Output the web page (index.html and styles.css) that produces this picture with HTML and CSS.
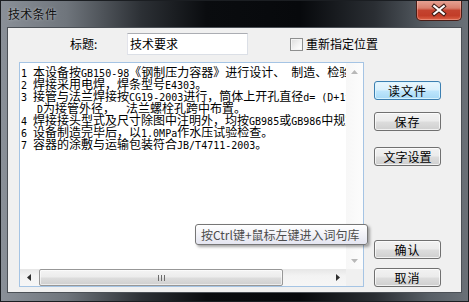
FILE: index.html
```html
<!DOCTYPE html>
<html lang="zh">
<head>
<meta charset="utf-8">
<title>技术条件</title>
<link rel="stylesheet" href="styles.css">
</head>
<body>
<div class="window">
  <div class="titlebar">
    <span class="title">技术条件</span>
    <div class="close">
      <svg width="46" height="20" viewBox="0 0 46 20">
        <path d="M18 6 L28 14 M28 6 L18 14" stroke="#3a1a14" stroke-width="4.2" stroke-linecap="square" fill="none"/>
        <path d="M18 6 L28 14 M28 6 L18 14" stroke="#ffffff" stroke-width="2.2" stroke-linecap="square" fill="none"/>
      </svg>
    </div>
  </div>
  <div class="client">
    <div class="toprow">
      <span class="lbl">标题:</span>
      <div class="input">技术要求</div>
      <span class="check"></span>
      <span class="chklbl">重新指定位置</span>
    </div>
    <div class="main">
      <div class="memo">
        <div class="text">
          <div class="ln"><span class="l">1 </span>本设备按<span class="l">GB150-98</span>《钢制压力容器》进行设计、<span class="l"> </span>制造、检验</div>
          <div class="ln"><span class="l">2 </span>焊接采用电焊，焊条型号<span class="l">E4303</span>。</div>
          <div class="ln"><span class="l">3 </span>接管与法兰焊接按<span class="l">CG19-2003</span>进行，筒体上开孔直径<span class="l">d= (D+1^</span></div>
          <div class="ln"><span class="ind"></span><span class="l">D</span>为接管外径，<span class="sp"></span>法兰螺栓孔跨中布置。</div>
          <div class="ln"><span class="l">4 </span>焊接接头型式及尺寸除图中注明外，均按<span class="l">GB985</span>或<span class="l">GB986</span>中规定</div>
          <div class="ln"><span class="l">6 </span>设备制造完毕后，以<span class="l">1.0MPa</span>作水压试验检查。</div>
          <div class="ln"><span class="l">7 </span>容器的涂敷与运输包装符合<span class="l">JB/T4711-2003</span>。</div>
        </div>
        <div class="vscroll">
          <div class="sbtn"><svg width="7" height="4" viewBox="0 0 7 4"><path d="M0 4 L3.5 0 L7 4 Z" fill="#b8b8b8"/></svg></div>
          <div class="sbtn"><svg width="7" height="4" viewBox="0 0 7 4"><path d="M0 0 L3.5 4 L7 0 Z" fill="#b8b8b8"/></svg></div>
        </div>
        <div class="hscroll">
          <div class="hbtn"><svg width="4" height="7" viewBox="0 0 4 7"><path d="M4 0 L0 3.5 L4 7 Z" fill="#2e2e2e"/></svg></div>
          <div class="thumb">
            <svg width="7" height="6" viewBox="0 0 7 6"><path d="M0.5 0 V6 M3.5 0 V6 M6.5 0 V6" stroke="#6c6c6c" stroke-width="1"/></svg>
          </div>
          <div class="hbtn right"><svg width="4" height="7" viewBox="0 0 4 7"><path d="M0 0 L4 3.5 L0 7 Z" fill="#2e2e2e"/></svg></div>
        </div>
        <div class="corner"></div>
      </div>
      <div class="btns">
        <div class="btn def first">读文件</div>
        <div class="btn save">保存</div>
        <div class="btn font">文字设置</div>
        <div class="btn ok">确认</div>
        <div class="btn cancel">取消</div>
      </div>
    </div>
  </div>
  <div class="tooltip">按Ctrl键+鼠标左键进入词句库</div>
</div>
</body>
</html>
```
FILE: styles.css
```css
html, body {
  margin: 0;
  padding: 0;
  background: #000;
}

body {
  font-family: "Noto Sans CJK SC", "Noto Sans", sans-serif;
  font-size: 12px;
  color: #000;
}

.window {
  position: relative;
  width: 469px;
  height: 302px;
  box-sizing: border-box;
  border: 1px solid #1b1e22;
  background: linear-gradient(90deg, #8a9098 0%, #6f757c 14%, #2c3035 30%, #0a0c0f 44%, #07090c 64%, #2a2e33 80%, #596067 92%, #6a7077 100%);
  display: flex;
  flex-direction: column;
  overflow: hidden;
}

.titlebar {
  height: 26px;
  display: flex;
  align-items: flex-start;
}

.title {
  margin: 5px 0 0 7px;
  line-height: 15px;
  font-size: 12px;
  letter-spacing: 0.3px;
  color: #101010;
  text-shadow: 0 0 3px rgba(220, 225, 230, 0.7);
}

.close {
  margin-left: auto;
  margin-right: 6px;
  margin-top: -1px;
  width: 46px;
  height: 21px;
  box-sizing: border-box;
  border: 1px solid #4a1d16;
  border-top: none;
  border-radius: 0 0 5px 5px;
  background: linear-gradient(180deg, #e7a597 0%, #d9806e 40%, #c4432f 52%, #c23d28 78%, #dd6347 100%);
  box-shadow: inset 0 0 0 1px rgba(255, 210, 200, 0.35);
  display: flex;
}

.client {
  margin-left: 6px;
  width: 455px;
  height: 266px;
  box-sizing: border-box;
  border: 1px solid #4b5056;
  background: #f0f0f0;
  padding: 5px 0 0 11px;
  display: flex;
  flex-direction: column;
}

.toprow {
  height: 22px;
  display: flex;
  align-items: center;
  padding-left: 51px;
}

.lbl {
  width: 57px;
  line-height: 14px;
}

.input {
  width: 121px;
  height: 22px;
  box-sizing: border-box;
  border: 1px solid #dbdfe6;
  border-top-color: #abadb3;
  border-left-color: #e2e3ea;
  background: #fff;
  padding-left: 2px;
  line-height: 20px;
}

.check {
  margin-left: 42px;
  width: 13px;
  height: 13px;
  box-sizing: border-box;
  border: 1px solid #8e8f8f;
  background: linear-gradient(135deg, #dcdcdc 0%, #f4f4f4 60%, #ffffff 100%);
  box-shadow: inset 0 0 0 1px #f4f4f4;
}

.chklbl {
  margin-left: 3px;
  line-height: 14px;
}

.main {
  margin-top: 7px;
  display: flex;
}

.memo {
  width: 345px;
  height: 225px;
  box-sizing: border-box;
  border: 1px solid #a5c4e4;
  background: #fff;
  display: grid;
  grid-template-columns: 326px 17px;
  grid-template-rows: 206px 17px;
}

.text {
  overflow: hidden;
  padding: 3px 0 0 1px;
}

.ln {
  height: 12px;
  line-height: 12px;
  font-size: 12px;
  white-space: pre;
}

.l {
  font-family: "DejaVu Sans Mono", "Liberation Mono", monospace;
  font-size: 10px;
}

.ind {
  display: inline-block;
  width: 16px;
}

.sp {
  display: inline-block;
  width: 11px;
}

.vscroll {
  grid-row: 1;
  grid-column: 2;
  background: linear-gradient(90deg, #f7f7f7, #fcfcfc);
  display: flex;
  flex-direction: column;
  justify-content: space-between;
}

.sbtn {
  height: 17px;
  display: flex;
  align-items: center;
  justify-content: center;
}

.hscroll {
  grid-row: 2;
  grid-column: 1;
  background: linear-gradient(180deg, #e6e6e6, #f3f3f3 40%, #f6f6f6);
  display: flex;
  align-items: stretch;
}

.hbtn {
  width: 17px;
  display: flex;
  align-items: center;
  justify-content: center;
}

.hbtn.right {
  margin-left: auto;
}

.thumb {
  margin: 0 0 0 2px;
  width: 244px;
  box-sizing: border-box;
  border: 1px solid #979797;
  border-radius: 2px;
  background: linear-gradient(180deg, #f4f4f4 0%, #ececec 45%, #dcdcdc 55%, #cfcfcf 100%);
  box-shadow: inset 0 0 0 1px rgba(255, 255, 255, 0.6);
  display: flex;
  align-items: center;
  justify-content: center;
}

.corner {
  grid-row: 2;
  grid-column: 2;
  background: #f0f0f0;
}

.btns {
  margin-left: 10px;
  width: 67px;
  height: 225px;
  display: flex;
  flex-direction: column;
}

.btn {
  height: 19px;
  box-sizing: border-box;
  border: 1px solid #707070;
  border-radius: 3px;
  background: linear-gradient(180deg, #f2f2f2 0%, #ebebeb 48%, #dddddd 52%, #cfcfcf 100%);
  box-shadow: inset 0 0 0 1px rgba(255, 255, 255, 0.7);
  display: flex;
  align-items: center;
  justify-content: center;
  line-height: 14px;
  font-size: 12px;
  letter-spacing: 1px;
}

.btn.def {
  border-color: #3c7fb1;
  background: linear-gradient(180deg, #eaf6fd 0%, #d9f0fc 48%, #bee6fd 52%, #a7d9f5 100%);
  box-shadow: inset 0 0 0 1px rgba(220, 245, 255, 0.9);
}

.first { margin-top: 19px; }
.save { margin-top: 12px; }
.font { margin-top: 16px; letter-spacing: 0; }
.ok { margin-top: auto; }
.cancel { margin-top: 9px; }

.tooltip {
  position: absolute;
  left: 194px;
  top: 223px;
  width: 173px;
  height: 21px;
  box-sizing: border-box;
  border: 1px solid #767676;
  border-radius: 3px;
  background: linear-gradient(180deg, #ffffff 0%, #e4e5f0 100%);
  box-shadow: 2px 2px 3px rgba(0, 0, 0, 0.35);
  color: #4c4c4c;
  font-size: 12px;
  line-height: 19px;
  padding-left: 5px;
  white-space: nowrap;
}
```
